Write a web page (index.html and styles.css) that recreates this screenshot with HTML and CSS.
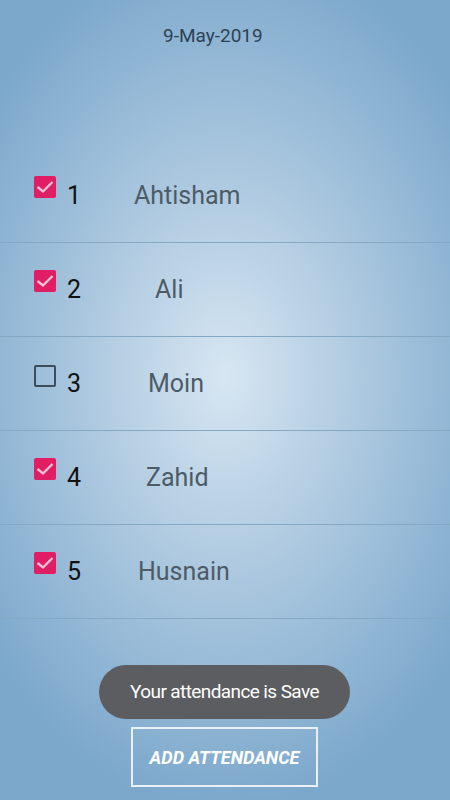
FILE: index.html
```html
<!DOCTYPE html>
<html lang="en">
<head>
    <meta charset="UTF-8">
    <meta name="viewport" content="width=device-width, initial-scale=1.0">
    <title>Attendance</title>
    <link rel="stylesheet" href="styles.css">
</head>
<body>
    <div id="screen">
        <p id="date">9-May-2019</p>
        <div id="list">
            <div class="row">
                <span class="box checked"><svg viewBox="0 0 22 22"><path d="M3.5 11 L9 15.5 L18.5 6"/></svg></span>
                <span class="num">1</span>
                <span class="name">Ahtisham</span>
            </div>
            <div class="row">
                <span class="box checked"><svg viewBox="0 0 22 22"><path d="M3.5 11 L9 15.5 L18.5 6"/></svg></span>
                <span class="num">2</span>
                <span class="name">Ali</span>
            </div>
            <div class="row">
                <span class="box"></span>
                <span class="num">3</span>
                <span class="name">Moin</span>
            </div>
            <div class="row">
                <span class="box checked"><svg viewBox="0 0 22 22"><path d="M3.5 11 L9 15.5 L18.5 6"/></svg></span>
                <span class="num">4</span>
                <span class="name">Zahid</span>
            </div>
            <div class="row">
                <span class="box checked"><svg viewBox="0 0 22 22"><path d="M3.5 11 L9 15.5 L18.5 6"/></svg></span>
                <span class="num">5</span>
                <span class="name">Husnain</span>
            </div>
        </div>
        <div id="bottom">
            <button id="add">ADD ATTENDANCE</button>
        </div>
        <div id="toast">Your attendance is Save</div>
    </div>
</body>
</html>
```

FILE: styles.css
```css
body { margin: unset; }
* {
    font-family: Roboto, "Noto Sans", sans-serif;
    box-sizing: border-box;
}
#screen {
    position: relative;
    width: 450px;
    height: 800px;
    display: flex;
    flex-flow: column;
    background: radial-gradient(ellipse 300px 430px at 50% 47%, #d7e6f2 0%, #a9c6de 50%, #7ca8cc 100%);
}
#date {
    margin: 0;
    padding: 24px 0 0 163px;
    height: 149px;
    font-size: 19px;
    line-height: 24px;
    color: #2e4255;
}
#list {
    display: flex;
    flex-flow: column;
}
.row {
    display: flex;
    flex-flow: row;
    align-items: flex-start;
    height: 94px;
    padding: 27px 0 0 34px;
    border-bottom: 1px solid #87a8c2;
}
.box {
    width: 22px;
    height: 22px;
    border-radius: 2px;
    border: 2px solid #3f4d5a;
    margin-top: 1px;
}
.box.checked {
    border: none;
    margin-top: 0;
    background-color: #df1e63;
}
.box svg {
    display: block;
    width: 22px;
    height: 22px;
    fill: none;
    stroke: #f4c1d4;
    stroke-width: 2.4;
}
.num {
    margin: 5px 0 0 11px;
    width: 20px;
    font-size: 25px;
    line-height: 30px;
    color: #111;
}
.name {
    margin-top: 5px;
    font-size: 25px;
    line-height: 30px;
    color: #4d5b67;
}
.row:nth-child(1) .name { margin-left: 47px; }
.row:nth-child(2) .name { margin-left: 68px; }
.row:nth-child(3) .name { margin-left: 61px; }
.row:nth-child(4) .name { margin-left: 59px; }
.row:nth-child(5) .name { margin-left: 51px; }
#bottom {
    flex: 1;
    display: flex;
    justify-content: center;
    align-items: flex-end;
    padding-bottom: 13px;
}
#add {
    width: 187px;
    height: 60px;
    margin-left: -1px;
    background: transparent;
    border: 2px solid #e9f1f7;
    color: #fff;
    font-size: 18px;
    font-weight: bold;
    font-style: italic;
}
#toast {
    position: absolute;
    left: 99px;
    top: 665px;
    width: 251px;
    height: 54px;
    border-radius: 27px;
    background-color: #5b5d60;
    color: #fff;
    font-size: 19px;
    letter-spacing: -0.6px;
    line-height: 54px;
    text-align: center;
}
```
